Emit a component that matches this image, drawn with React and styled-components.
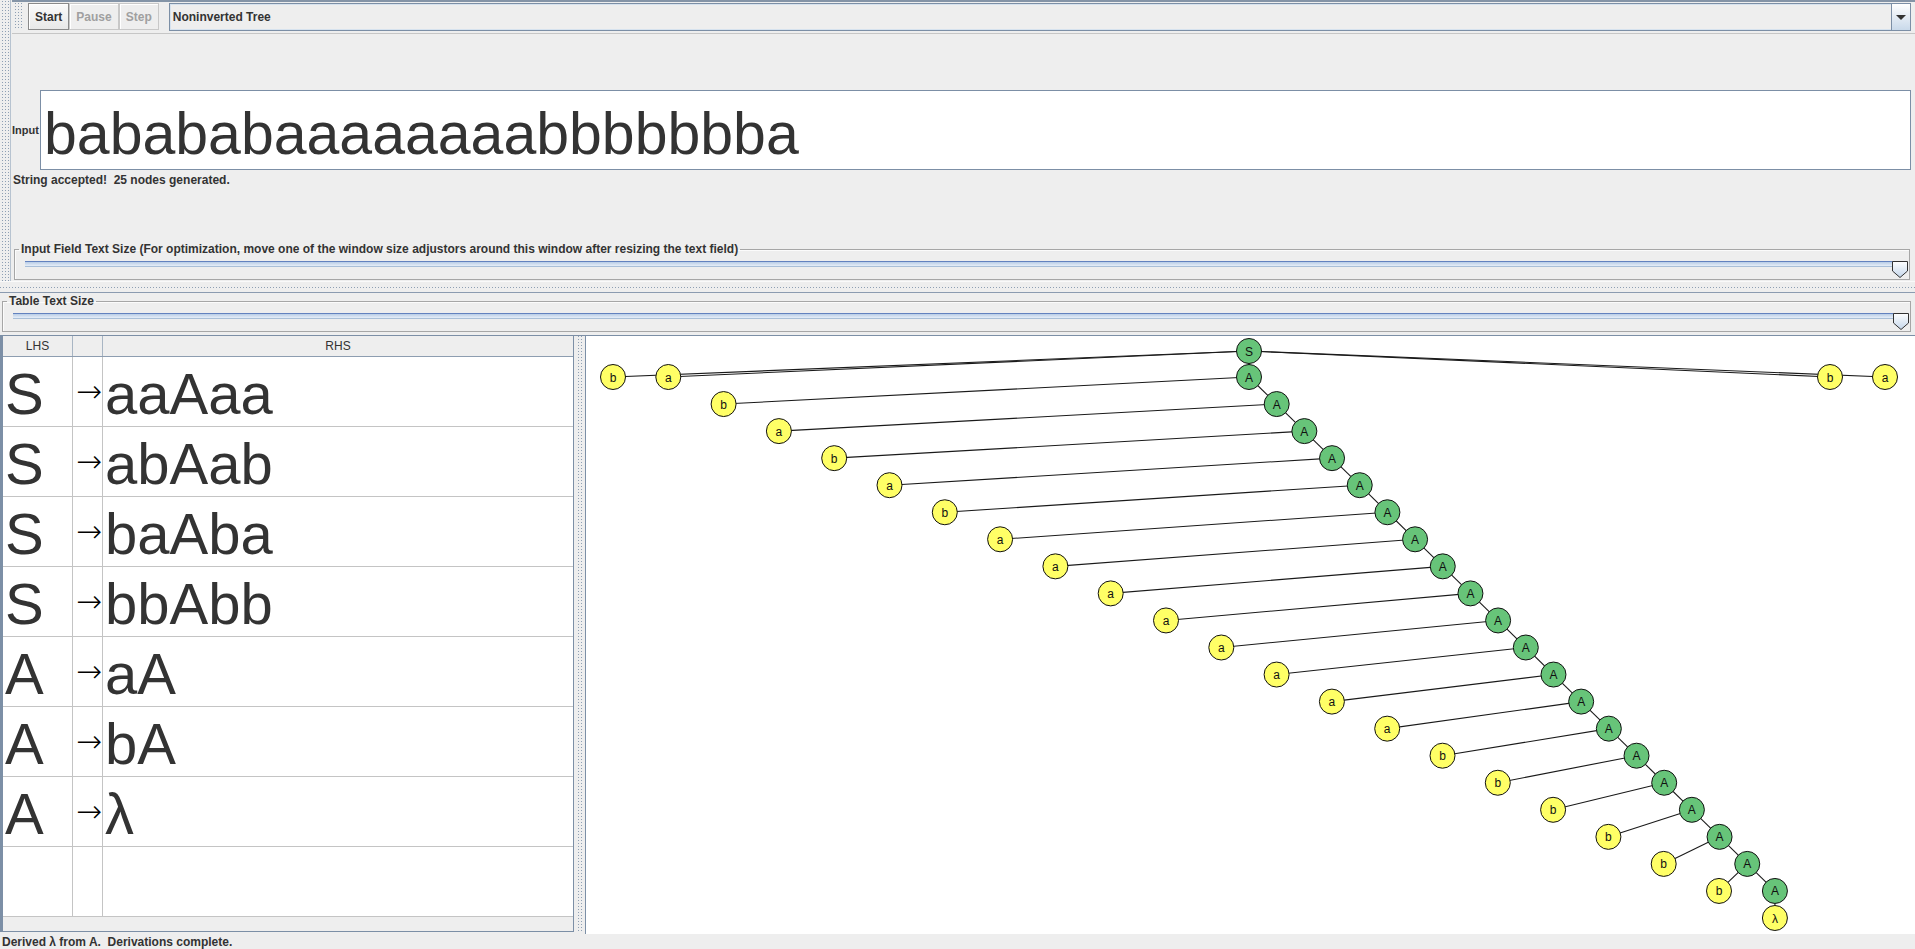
import React from "react";
import styled, { createGlobalStyle } from "styled-components";

const SANS = `"Liberation Sans", Arial, sans-serif`;
const DOTS = `conic-gradient(from 270deg at 1px 1px, #8e9fb3 90deg, transparent 0)`;
const EDGE = "#7c8fa6";

const GlobalStyle = createGlobalStyle`
  html, body { margin: 0; padding: 0; background: #eeeeee; }
  body { font-family: ${SANS}; }
`;

const rules = [
  ["S", "aaAaa"],
  ["S", "abAab"],
  ["S", "baAba"],
  ["S", "bbAbb"],
  ["A", "aA"],
  ["A", "bA"],
  ["A", "λ"],
  ["", ""],
];

// parse tree geometry (page coordinates)
const DX = 27.68;
const DY = 27.05;
const leafText = "bababab" + "aaaaaaaa" + "bbbbbb";

const buildTree = () => {
  const nodes = [];
  const edges = [];
  const S = { x: 1249, y: 350, t: "S", v: true };
  nodes.push(S);
  const spine = [];
  for (let k = 1; k <= 20; k++) {
    spine.push({ x: 1249 + DX * (k - 1), y: 376 + DY * (k - 1), t: "A", v: true });
  }
  const leaves = leafText.split("").map((t, i) => ({
    x: 613 + 55.3 * i,
    y: i < 2 ? 376 : 376 + DY * (i - 1),
    t,
    v: false,
  }));
  const rb = { x: 1830, y: 376, t: "b", v: false };
  const ra = { x: 1885, y: 376, t: "a", v: false };
  const lam = { x: spine[19].x, y: 917, t: "λ", v: false };

  edges.push([S, leaves[0]], [S, leaves[1]], [S, spine[0]], [S, rb], [S, ra]);
  for (let k = 0; k < 19; k++) {
    edges.push([spine[k], leaves[k + 2]], [spine[k], spine[k + 1]]);
  }
  edges.push([spine[19], lam]);
  nodes.push(...spine, ...leaves, rb, ra, lam);
  return { nodes, edges };
};

const tree = buildTree();

export default function App() {
  return (
    <>
      <GlobalStyle />
      <Frame>
        <TopPanel>
          <SideGrip />
          <TopContent>
            <Toolbar>
              <ToolGrip />
              <ToolButton>Start</ToolButton>
              <ToolButton disabled>Pause</ToolButton>
              <ToolButton disabled>Step</ToolButton>
              <Combo>
                <ComboText>Noninverted Tree</ComboText>
                <ComboArrow>
                  <Caret />
                </ComboArrow>
              </Combo>
            </Toolbar>
            <InputRow>
              <InputLabel>Input</InputLabel>
              <InputField>babababaaaaaaaabbbbbbba</InputField>
            </InputRow>
            <StatusLine>String accepted!&nbsp; 25 nodes generated.</StatusLine>
            <InputSizeBox>
              <BoxTitle>
                Input Field Text Size (For optimization, move one of the window size adjustors
                around this window after resizing the text field)
              </BoxTitle>
              <Slider />
            </InputSizeBox>
          </TopContent>
        </TopPanel>
        <MidDivider />
        <TableSizeBox>
          <BoxTitle>Table Text Size</BoxTitle>
          <Slider />
        </TableSizeBox>
        <BottomPanel>
          <TablePane>
            <HeaderRow>
              <HeaderCell>LHS</HeaderCell>
              <HeaderCell />
              <HeaderCell $last>RHS</HeaderCell>
            </HeaderRow>
            {rules.map(([lhs, rhs], i) => (
              <Row key={i}>
                <Cell>{lhs}</Cell>
                <ArrowCell>{lhs ? "→" : ""}</ArrowCell>
                <Cell $last>{rhs}</Cell>
              </Row>
            ))}
            <Filler />
          </TablePane>
          <VDivider />
          <TreePane>
            <TreeView />
          </TreePane>
        </BottomPanel>
        <StatusBar>Derived λ from A.&nbsp; Derivations complete.</StatusBar>
      </Frame>
    </>
  );
}

const Slider = () => (
  <SliderWrap>
    <Track />
    <Thumb width="16" height="17" viewBox="0 0 16 17">
      <defs>
        <linearGradient id="thumbFill" x1="0" y1="0" x2="0" y2="1">
          <stop offset="0" stopColor="#ffffff" />
          <stop offset="1" stopColor="#c4d6ea" />
        </linearGradient>
      </defs>
      <path
        d="M0.5 0.5 H15.5 V10 L8 16.5 L0.5 10 Z"
        fill="url(#thumbFill)"
        stroke="#333"
        strokeWidth="1"
      />
    </Thumb>
  </SliderWrap>
);

const TreeView = () => (
  <svg width="1329" height="598" viewBox="586 335 1329 598">
    {tree.edges.map(([a, b], i) => (
      <line key={i} x1={a.x} y1={a.y} x2={b.x} y2={b.y} stroke="#1a1a1a" strokeWidth="1.1" />
    ))}
    {tree.nodes.map((n, i) => (
      <g key={i}>
        <circle cx={n.x} cy={n.y} r="12.5" fill={n.v ? "#67c479" : "#ffff66"} stroke="#111" strokeWidth="1" />
        <NodeLabel x={n.x} y={n.y + 4.5} textAnchor="middle">
          {n.t}
        </NodeLabel>
      </g>
    ))}
  </svg>
);

const Frame = styled.div`
  width: 1915px;
  height: 949px;
  display: flex;
  flex-direction: column;
  background: #eeeeee;
  color: #333;
  font-family: ${SANS};
  overflow: hidden;
`;

const TopPanel = styled.div`
  display: flex;
  height: 281px;
  flex-shrink: 0;
`;

const SideGrip = styled.div`
  width: 10px;
  margin-right: 1px;
  border-right: 1px solid #b7c3d0;
  background-image: ${DOTS};
  background-size: 3px 3px;
  background-position: 2px 1px;
`;

const TopContent = styled.div`
  flex: 1;
  display: flex;
  flex-direction: column;
  border-top: 2px solid #8494a7;
  min-width: 0;
`;

const Toolbar = styled.div`
  display: flex;
  align-items: flex-start;
  height: 32px;
  box-sizing: border-box;
  padding: 1px 4px 0 3px;
  border-bottom: 1px solid #c6c6c6;
`;

const ToolGrip = styled.div`
  width: 9px;
  height: 27px;
  margin-right: 4px;
  background-image: ${DOTS};
  background-size: 3px 3px;
`;

const ToolButton = styled.button`
  height: 27px;
  padding: 0 6px;
  margin: 0;
  border: 1px solid #8a8a8a;
  background: linear-gradient(#fafafa, #e8e8e8);
  box-shadow: inset 1px 1px 0 #fff;
  font: bold 12px ${SANS};
  color: #333;
  &:disabled {
    border-color: #c8c8c8;
    color: #a0a0a0;
    background: #eeeeee;
  }
`;

const Combo = styled.div`
  flex: 1;
  display: flex;
  height: 28px;
  margin-left: 10px;
  box-sizing: border-box;
  border: 1px solid ${EDGE};
  box-shadow: inset 0 0 0 1px #d6e2ee;
`;

const ComboText = styled.div`
  flex: 1;
  padding-left: 3px;
  font: bold 12px/26px ${SANS};
  color: #333;
`;

const ComboArrow = styled.div`
  width: 18px;
  display: flex;
  align-items: center;
  justify-content: center;
  border-left: 1px solid ${EDGE};
  background: linear-gradient(#ffffff, #c9d9ea);
`;

const Caret = styled.div`
  width: 0;
  height: 0;
  border-left: 5px solid transparent;
  border-right: 5px solid transparent;
  border-top: 5px solid #333;
`;

const InputRow = styled.div`
  display: flex;
  align-items: center;
  margin-top: 56px;
  margin-right: 4px;
`;

const InputLabel = styled.div`
  width: 28px;
  font: bold 11px ${SANS};
  color: #333;
`;

const InputField = styled.div`
  flex: 1;
  height: 80px;
  box-sizing: border-box;
  padding: 14px 0 0 3px;
  border: 1px solid ${EDGE};
  background: #fff;
  font: 59px/1 ${SANS};
  color: #333;
  white-space: nowrap;
  overflow: hidden;
`;

const StatusLine = styled.div`
  margin-top: 2px;
  padding-left: 1px;
  font: bold 12px/16px ${SANS};
  color: #333;
`;

const TitledBox = styled.fieldset`
  min-width: 0;
  padding: 0 1px 1px 10px;
  border: 1px solid #a6a6a6;
  box-shadow: inset 1px 1px 0 #fbfbfb;
`;

const InputSizeBox = styled(TitledBox)`
  margin: auto 5px 1px 2px;
`;

const TableSizeBox = styled(TitledBox)`
  margin: 1px 4px 3px 2px;
  flex-shrink: 0;
`;

const BoxTitle = styled.legend`
  margin-left: -6px;
  padding: 0 2px;
  font: bold 12px/14px ${SANS};
  color: #333;
`;

const SliderWrap = styled.div`
  position: relative;
  height: 17px;
  margin-top: 4px;
`;

const Track = styled.div`
  height: 6px;
  margin: 5px 8px 0 0;
  box-sizing: border-box;
  border-top: 1px solid #6382bf;
  border-bottom: 1px solid #a9bfd8;
  background: linear-gradient(#b9cde6, #e6eef8);
`;

const Thumb = styled.svg`
  position: absolute;
  right: 0;
  top: 0;
`;

const MidDivider = styled.div`
  height: 12px;
  flex-shrink: 0;
  box-sizing: border-box;
  padding: 5px 0 2px;
  border-top: 1px solid #fafafa;
  border-bottom: 1px solid #8b9bb0;
  background-image: ${DOTS};
  background-size: 3px 3px;
  background-clip: content-box;
  background-origin: content-box;
`;

const BottomPanel = styled.div`
  display: flex;
  height: 599px;
  flex-shrink: 0;
  box-sizing: border-box;
  border-top: 1px solid ${EDGE};
`;

const TablePane = styled.div`
  width: 574px;
  height: 596px;
  box-sizing: border-box;
  display: flex;
  flex-direction: column;
  border: 1px solid ${EDGE};
  border-top: none;
  border-left-width: 3px;
  background: #eeeeee;
`;

const HeaderRow = styled.div`
  display: grid;
  grid-template-columns: 70px 30px 1fr;
  height: 21px;
  box-sizing: border-box;
  border-bottom: 1px solid #8d9db0;
`;

const HeaderCell = styled.div`
  border-right: ${(p) => (p.$last ? "none" : "1px solid #a8b5c3")};
  background: #eeeeee;
  text-align: center;
  font: 12px/20px ${SANS};
  color: #333;
`;

const Row = styled.div`
  display: grid;
  grid-template-columns: 70px 30px 1fr;
  height: 70px;
  box-sizing: border-box;
  border-bottom: 1px solid #c4c4c4;
  background: #fff;
`;

const Cell = styled.div`
  border-right: ${(p) => (p.$last ? "none" : "1px solid #c4c4c4")};
  padding: 8px 0 0 2px;
  font: 58px/1 ${SANS};
  color: #333;
  white-space: nowrap;
  overflow: hidden;
`;

const ArrowCell = styled.div`
  display: flex;
  align-items: center;
  padding-left: 3px;
  border-right: 1px solid #c4c4c4;
  font: 200 31px/1 "DejaVu Sans", sans-serif;
  color: #000;
  overflow: hidden;
`;

const Filler = styled.div`
  flex: 1;
`;

const VDivider = styled.div`
  width: 11px;
  box-sizing: border-box;
  padding: 0 1px 3px 4px;
  background-image: ${DOTS};
  background-size: 3px 3px;
  background-clip: content-box;
  background-origin: content-box;
`;

const TreePane = styled.div`
  flex: 1;
  height: 598px;
  background: #fff;
  border-left: 1px solid ${EDGE};
  overflow: hidden;
`;

const NodeLabel = styled.text`
  font: 12px ${SANS};
  fill: #111;
`;

const StatusBar = styled.div`
  height: 16px;
  flex-shrink: 0;
  padding-left: 2px;
  font: bold 12px/16px ${SANS};
  color: #333;
`;
